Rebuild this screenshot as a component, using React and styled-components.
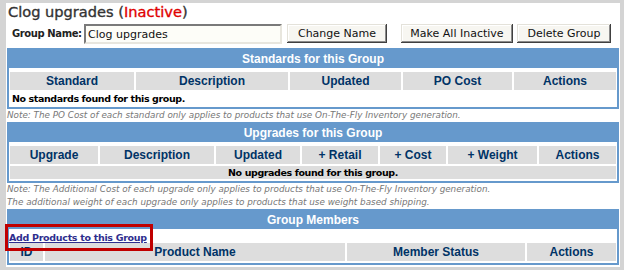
import styled, { createGlobalStyle } from 'styled-components';

const GlobalStyle = createGlobalStyle`
  html, body {
    margin: 0;
    padding: 0;
    background: #d4d4d4;
  }
  body {
    font-family: "DejaVu Sans", Verdana, sans-serif;
  }
`;

const Page = styled.div`
  padding: 3px 4px 4px 6px;
`;

const Panel = styled.div`
  background: #fff;
  padding: 0 0 2px 1px;
`;

const Title = styled.h1`
  margin: 0 0 0 1px;
  font: normal 14.6px/18px "DejaVu Sans", Verdana, sans-serif;
  color: #333;
  -webkit-text-stroke: 0.35px currentColor;

  span {
    color: #e00000;
  }
`;

const FormRow = styled.div`
  display: flex;
  align-items: flex-start;
  margin-top: 3px;
  height: 20px;
`;

const Label = styled.label`
  width: 77px;
  padding-left: 5px;
  box-sizing: border-box;
  font: bold 10px/20px "DejaVu Sans", Verdana, sans-serif;
  letter-spacing: -0.4px;
  white-space: nowrap;
  color: #222;
`;

const TextInput = styled.input`
  width: 198px;
  height: 20px;
  box-sizing: border-box;
  margin: 0;
  padding: 0 2px;
  font: 11px "DejaVu Sans", Verdana, sans-serif;
  color: #111;
  background: #fdfdf8;
  border: 2px solid;
  border-color: #7a7a7a #e8e6de #e8e6de #7a7a7a;
  outline: none;
`;

const Button = styled.button`
  width: ${p => p.$w}px;
  height: 19px;
  margin-left: ${p => p.$gap}px;
  padding: 0;
  font: 11px "DejaVu Sans", Verdana, sans-serif;
  color: #111;
  background: #f7f6f1;
  border: none;
  box-shadow: inset -1px -1px #404040, inset 1px 1px #e4e2da, inset -2px -2px #8a8a8a,
    inset 2px 2px #fff;
`;

const Box = styled.div`
  position: relative;
  margin: ${p => p.$top}px 1px 0 0;
  border: 2px solid #6699cc;
`;

const BoxTitle = styled.div`
  background: #6699cc;
  color: #fff;
  text-align: center;
  font: bold 12px/18px "Liberation Sans", Arial, sans-serif;
`;

const Grid = styled.table`
  width: calc(100% + 2px);
  margin: ${p => p.$top}px -1px 0;
  border-spacing: 2px;
  table-layout: fixed;
`;

const Col = styled.col`
  width: ${p => p.$w}px;
`;

const Th = styled.th`
  padding: 0;
  background: #dddddd;
  color: #003366;
  font: bold 12px/18px "Liberation Sans", Arial, sans-serif;
  text-align: center;
`;

const Td = styled.td`
  padding: 0 0 0 ${p => (p.$center ? 0 : 2)}px;
  height: 13px;
  background: ${p => (p.$shade ? '#dddddd' : '#fff')};
  color: #000;
  font: bold 9.5px/13px "DejaVu Sans", Verdana, sans-serif;
  letter-spacing: -0.4px;
  text-align: ${p => (p.$center ? 'center' : 'left')};
  white-space: nowrap;
`;

const Note = styled.div`
  font: italic 8.8px/13px "DejaVu Sans", Verdana, sans-serif;
  color: #777;
  white-space: nowrap;
`;

const LinkRow = styled.div`
  position: relative;
  height: 12px;
  font: bold 9.5px/18px "DejaVu Sans", Verdana, sans-serif;
  letter-spacing: -0.3px;

  a {
    color: #2e2e8e;
    text-decoration: underline;
  }
`;

const Highlight = styled.span`
  position: absolute;
  left: -4px;
  top: -5px;
  width: 148px;
  height: 27px;
  box-sizing: border-box;
  border: 3px solid #c00000;
  pointer-events: none;
`;

const standardCols = [
  ['Standard', 124],
  ['Description', 152],
  ['Updated', 111],
  ['PO Cost', 109],
  ['Actions', 102],
];

const upgradeCols = [
  ['Upgrade', 88],
  ['Description', 114],
  ['Updated', 84],
  ['+ Retail', 76],
  ['+ Cost', 66],
  ['+ Weight', 89],
  ['Actions', 77],
];

const memberCols = [
  ['ID', 33],
  ['Product Name', 300],
  ['Member Status', 178],
  ['Actions', 89],
];

function HeadRow({ cols }) {
  return (
    <>
      <colgroup>
        {cols.map(([name, w]) => (
          <Col key={name} $w={w} />
        ))}
      </colgroup>
      <thead>
        <tr>
          {cols.map(([name]) => (
            <Th key={name}>{name}</Th>
          ))}
        </tr>
      </thead>
    </>
  );
}

export default function App() {
  return (
    <Page>
      <GlobalStyle />
      <Panel>
        <Title>
          Clog upgrades (<span>Inactive</span>)
        </Title>

        <FormRow>
          <Label htmlFor="groupName">Group Name:</Label>
          <TextInput id="groupName" defaultValue="Clog upgrades" />
          <Button $w={100} $gap={5}>Change Name</Button>
          <Button $w={112} $gap={14}>Make All Inactive</Button>
          <Button $w={94} $gap={4}>Delete Group</Button>
        </FormRow>

        <Box $top={4}>
          <BoxTitle>Standards for this Group</BoxTitle>
          <Grid $top={2}>
            <HeadRow cols={standardCols} />
            <tbody>
              <tr>
                <Td colSpan={5}>No standards found for this group.</Td>
              </tr>
            </tbody>
          </Grid>
        </Box>
        <Note>
          Note: The PO Cost of each standard only applies to products that use On-The-Fly
          Inventory generation.
        </Note>

        <Box $top={0}>
          <BoxTitle>Upgrades for this Group</BoxTitle>
          <Grid $top={2}>
            <HeadRow cols={upgradeCols} />
            <tbody>
              <tr>
                <Td colSpan={7} $shade $center>
                  No upgrades found for this group.
                </Td>
              </tr>
            </tbody>
          </Grid>
        </Box>
        <Note>
          Note: The Additional Cost of each upgrade only applies to products that use
          On-The-Fly Inventory generation.
          <br />
          The additional weight of each upgrade only applies to products that use weight based
          shipping.
        </Note>

        <Box $top={0}>
          <BoxTitle>Group Members</BoxTitle>
          <LinkRow>
            <a href="#add">Add Products to this Group</a>
            <Highlight />
          </LinkRow>
          <Grid $top={0}>
            <HeadRow cols={memberCols} />
          </Grid>
        </Box>
      </Panel>
    </Page>
  );
}
